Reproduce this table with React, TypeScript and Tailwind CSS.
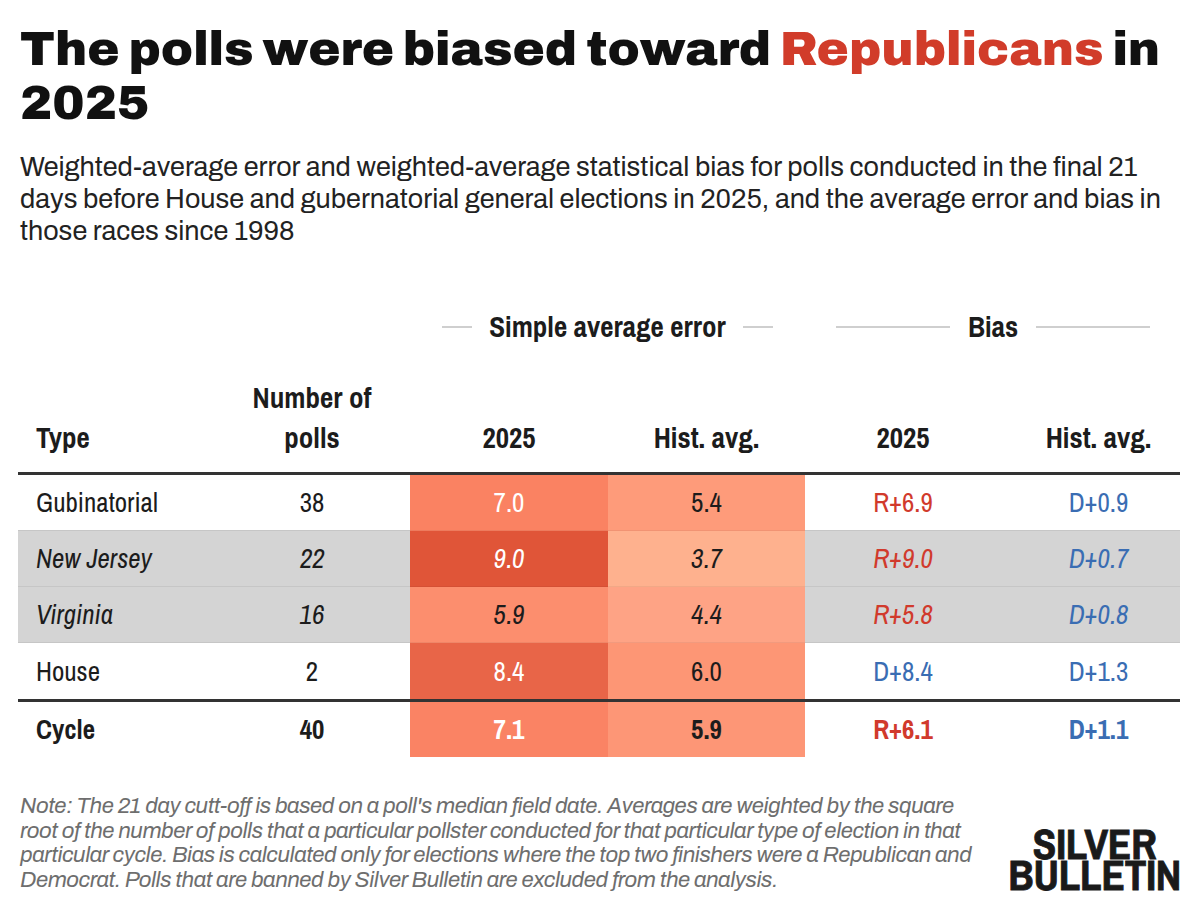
type Row = {
  type: string;
  n: string;
  e25: string;
  e25bg: string;
  e25light: boolean;
  eh: string;
  ehbg: string;
  b25: string;
  b25red: boolean;
  bh: string;
  italic: boolean;
  gray: boolean;
};

const rows: Row[] = [
  { type: "Gubinatorial", n: "38", e25: "7.0", e25bg: "bg-[#fa8262]", e25light: true, eh: "5.4", ehbg: "bg-[#fe9b7a]", b25: "R+6.9", b25red: true, bh: "D+0.9", italic: false, gray: false },
  { type: "New Jersey", n: "22", e25: "9.0", e25bg: "bg-[#e05538]", e25light: true, eh: "3.7", ehbg: "bg-[#feb18e]", b25: "R+9.0", b25red: true, bh: "D+0.7", italic: true, gray: true },
  { type: "Virginia", n: "16", e25: "5.9", e25bg: "bg-[#fc8e6e]", e25light: false, eh: "4.4", ehbg: "bg-[#fea385]", b25: "R+5.8", b25red: true, bh: "D+0.8", italic: true, gray: true },
  { type: "House", n: "2", e25: "8.4", e25bg: "bg-[#e86548]", e25light: true, eh: "6.0", ehbg: "bg-[#fd9675]", b25: "D+8.4", b25red: false, bh: "D+1.3", italic: false, gray: false },
];

const grid = "grid grid-cols-[196px_196px_198px_197px_196px_179px]";

function DataRow({ r, last }: { r: Row; last: boolean }) {
  const plain = `${r.gray ? "bg-[#d4d4d4]" : "bg-white"} ${last ? "" : "border-b border-[#c6c6c6]"}`;
  const it = r.italic ? "italic" : "";
  return (
    <div className={`${grid} h-[56px] text-[27px] text-[#1c1c1c] ${it}`}>
      <div className={`${plain} flex items-center pl-[18px]`}>{r.type}</div>
      <div className={`${plain} flex items-center justify-center`}>{r.n}</div>
      <div className={`${r.e25bg} ${last ? "" : "border-b border-black/5"} flex items-center justify-center ${r.e25light ? "text-white" : "text-[#1c1c1c]"}`}>{r.e25}</div>
      <div className={`${r.ehbg} ${last ? "" : "border-b border-black/5"} flex items-center justify-center`}>{r.eh}</div>
      <div className={`${plain} flex items-center justify-center ${r.b25red ? "text-[#d13a2c]" : "text-[#3a6db3]"}`}>{r.b25}</div>
      <div className={`${plain} flex items-center justify-center pl-[16px] text-[#3a6db3]`}>{r.bh}</div>
    </div>
  );
}

export default function App() {
  return (
    <div className="w-[1200px] h-[908px] bg-white px-[20px] overflow-hidden">
      <h1 className="w-[1170px] pt-[22px] text-[48.5px] leading-[54px] font-black text-[#111] font-['Archivo','Inter',sans-serif]">
        The polls were biased toward <span className="text-[#d13c2a]">Republicans</span> in
        <br />
        2025
      </h1>
      <p className="w-[1175px] mt-[21px] text-[27px] leading-[32px] text-[#222] font-['Archivo','Inter',sans-serif] font-normal">
        Weighted-average error and weighted-average statistical bias for polls conducted in the final 21
        <br />
        days before House and gubernatorial general elections in 2025, and the average error and bias in
        <br />
        those races since 1998
      </p>

      <div className="-ml-[2px] w-[1162px] mt-[60px] font-['Archivo_Narrow','Roboto_Condensed',sans-serif]">
        {/* section headers */}
        <div className={`${grid} h-[40px] text-[29px] font-bold text-[#1c1c1c]`}>
          <div />
          <div />
          <div className="col-span-2 flex items-center px-[32px]">
            <div className="flex-1 h-[2px] bg-[#cfcfcf]" />
            <div className="px-[17px] leading-[40px]">Simple average error</div>
            <div className="flex-1 h-[2px] bg-[#cfcfcf]" />
          </div>
          <div className="col-span-2 flex items-center pl-[31px] pr-[30px]">
            <div className="flex-1 h-[2px] bg-[#cfcfcf]" />
            <div className="px-[18px] leading-[40px]">Bias</div>
            <div className="flex-1 h-[2px] bg-[#cfcfcf]" />
          </div>
        </div>

        {/* column headers */}
        <div className={`${grid} mt-[31px] pb-[14px] text-[29px] leading-[40px] font-bold text-[#1c1c1c] border-b-[3px] border-[#333]`}>
          <div className="self-end pl-[18px]">Type</div>
          <div className="self-end text-center">Number of<br />polls</div>
          <div className="self-end text-center">2025</div>
          <div className="self-end text-center">Hist. avg.</div>
          <div className="self-end text-center">2025</div>
          <div className="self-end text-center pl-[16px]">Hist. avg.</div>
        </div>

        {rows.map((r, i) => (
          <DataRow key={r.type} r={r} last={i === rows.length - 1} />
        ))}

        <div className={`${grid} h-[58px] text-[27px] font-bold text-[#1c1c1c] border-t-[3px] border-[#333]`}>
          <div className="flex items-center pl-[18px]">Cycle</div>
          <div className="flex items-center justify-center">40</div>
          <div className="bg-[#fa8364] flex items-center justify-center text-white">7.1</div>
          <div className="bg-[#fd9676] flex items-center justify-center">5.9</div>
          <div className="flex items-center justify-center text-[#d13a2c]">R+6.1</div>
          <div className="flex items-center justify-center pl-[16px] text-[#3a6db3]">D+1.1</div>
        </div>
      </div>

      <div className="mt-[37px] flex items-end justify-between">
        <p className="w-[985px] text-[22.2px] leading-[24.7px] italic tracking-[-0.4px] text-[#6e6e6e] font-['Archivo','Inter',sans-serif]">
          Note: The 21 day cutt-off is based on a poll&apos;s median field date. Averages are weighted by the square
          <br />
          root of the number of polls that a particular pollster conducted for that particular type of election in that
          <br />
          particular cycle. Bias is calculated only for elections where the top two finishers were a Republican and
          <br />
          Democrat. Polls that are banned by Silver Bulletin are excluded from the analysis.
        </p>
        <div className="mb-[4px] mr-[-1px] flex flex-col items-center text-[43px] font-bold text-[#1a1a1a] font-['Archivo_Narrow','Roboto_Condensed',sans-serif] tracking-[-0.2px] [-webkit-text-stroke:0.8px_#1a1a1a]">
          <div className="h-[32px] leading-[32px]">SILVER</div>
          <div className="h-[30px] leading-[30px]">BULLETIN</div>
        </div>
      </div>
    </div>
  );
}
